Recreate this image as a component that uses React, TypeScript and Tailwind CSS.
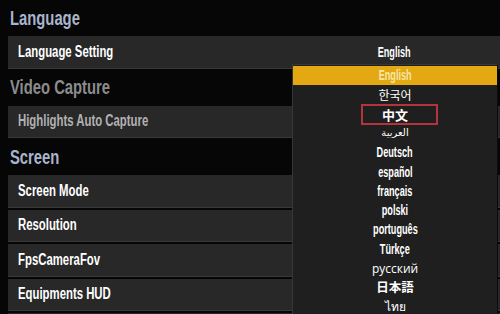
import React from 'react';

const font = { fontFamily: '"Liberation Sans", Arial, sans-serif' };

interface Lang {
  label: string;
  className?: string;
}

// latin labels use a squeezed Liberation Sans bold to look like the condensed game font
const condensed = 'inline-block origin-center scale-x-[0.63] text-[14.5px] font-bold';

const languages: Lang[] = [
  { label: 'English', className: condensed },
  { label: '한국어', className: 'font-normal text-[#d6d6d6] font-["Noto_Sans_CJK_KR",sans-serif] text-[12px]' },
  { label: '中文', className: 'font-bold font-["Noto_Sans_CJK_SC",sans-serif] text-[13px]' },
  { label: 'العربية', className: 'font-normal text-[#cfcfcf] font-["DejaVu_Sans",sans-serif] text-[10px]' },
  { label: 'Deutsch', className: condensed },
  { label: 'español', className: condensed },
  { label: 'français', className: condensed },
  { label: 'polski', className: condensed },
  { label: 'português', className: condensed },
  { label: 'Türkçe', className: condensed },
  { label: 'русский', className: 'font-normal text-[#d6d6d6] font-["Open_Sans",sans-serif] text-[13px] inline-block scale-x-[0.92]' },
  { label: '日本語', className: 'font-bold font-["Noto_Sans_CJK_JP",sans-serif] text-[12.5px]' },
  { label: 'ไทย', className: 'font-normal text-[#cfcfcf] text-[12px]' },
];

function Heading({ children, muted = false, first = false }: { children: React.ReactNode; muted?: boolean; first?: boolean }) {
  return (
    <div className={`flex items-center pl-[2px] ${first ? 'h-[36px]' : 'h-[37px]'}`}>
      <span
        className={`inline-block origin-left scale-x-[0.74] whitespace-nowrap text-[20px] font-bold ${
          muted ? 'text-[#8c8c8c]' : 'text-[#a9b4cc]'
        }`}
      >
        {children}
      </span>
    </div>
  );
}

function Row({ label, muted = false, value }: { label: string; muted?: boolean; value?: string }) {
  return (
    <div className="flex h-[32.5px] items-center border-b border-[#393939] bg-[#282828] pl-[10px]">
      <span className="flex-1">
        <span
          className={`inline-block origin-left scale-x-[0.71] whitespace-nowrap text-[16px] font-bold ${
            muted ? 'text-[#b1b1b1]' : 'text-white'
          }`}
        >
          {label}
        </span>
      </span>
      {value && (
        <span className="mr-[3px] w-[205px] text-center">
          <span className={`${condensed} text-white`}>{value}</span>
        </span>
      )}
    </div>
  );
}

export default function App() {
  return (
    <div className="relative h-[314px] w-[500px] overflow-hidden bg-[#060607]" style={font}>
      <div className="pl-[8px]">
        <Heading first>Language</Heading>
        <Row label="Language Setting" value="English" />
        <Heading muted>Video Capture</Heading>
        <Row label="Highlights Auto Capture" muted />
        <Heading>Screen</Heading>
        <div className="flex flex-col gap-[2px]">
          <Row label="Screen Mode" />
          <Row label="Resolution" />
          <Row label="FpsCameraFov" />
          <Row label="Equipments HUD" />
          <Row label="" />
        </div>
      </div>

      {/* Language dropdown */}
      <div className="absolute left-[292px] top-[64px] w-[206px] border-l border-r border-t border-l-[#363636] border-r-[#0b0b0b] border-t-[#363636] bg-[#1f1f1f] pt-[1px]">
        {languages.map((lang, i) => (
          <div
            key={lang.label}
            className={`relative flex h-[19.25px] items-center justify-center ${i === 0 ? 'bg-[#e3a812]' : ''}`}
          >
            <span className={`leading-none ${i === 0 ? 'text-[#f6e6a6]' : 'text-white'} ${lang.className ?? ''}`}>
              {lang.label}
            </span>
            {lang.label === '中文' && (
              <span className="absolute left-[68px] top-[-1px] h-[21px] w-[77px] border-2 border-[#b3333f]" />
            )}
          </div>
        ))}
      </div>
    </div>
  );
}
